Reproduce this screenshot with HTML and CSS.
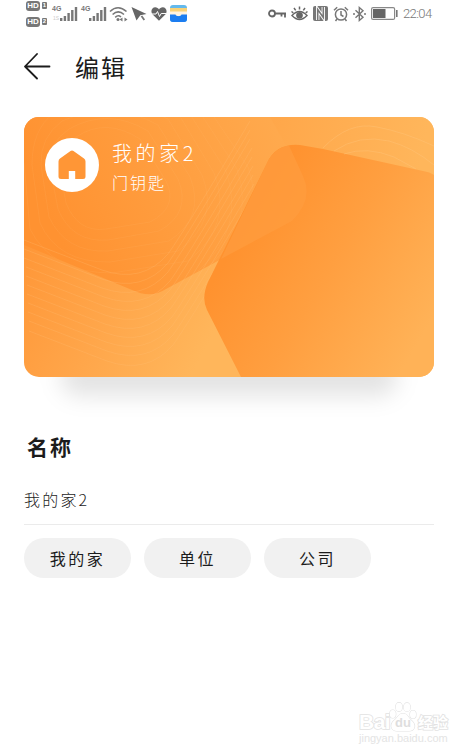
FILE: index.html
```html
<!DOCTYPE html>
<html lang="zh-CN">
<head>
    <meta charset="UTF-8">
    <meta name="viewport" content="width=device-width, initial-scale=1.0">
    <title>编辑</title>
    <link rel="stylesheet" href="styles.css">
</head>
<body>
    <div class="status-bar">
        <div class="status-left">
            <div class="sims">
                <div class="sim"><span class="hd">HD</span><span class="slot">1</span></div>
                <div class="sim"><span class="hd">HD</span><span class="slot">2</span></div>
            </div>
            <div class="signal">
                <span class="net">4G</span>
                <span class="roam">1S</span>
                <svg width="18" height="16" viewBox="0 0 18 16"><path d="M1.2 12v3M4.9 10v5M8.6 7v8M12.3 4v11M16 1v14" stroke="#777" stroke-width="2.4"/></svg>
            </div>
            <div class="signal second">
                <span class="net">4G</span>
                <svg width="18" height="16" viewBox="0 0 18 16"><path d="M1.2 12v3M4.9 10v5M8.6 7v8M12.3 4v11M16 1v14" stroke="#777" stroke-width="2.4"/></svg>
            </div>
            <svg class="wifi" width="19" height="16" viewBox="0 0 19 16" fill="none" stroke="#777" stroke-width="1.6">
                <path d="M1 5.5Q9 -2 17.5 5.5M3.6 8.5Q9.2 3.3 15 8.5M6.2 11.3Q9.2 8.4 12 11"/>
                <circle cx="9" cy="13.5" r="1.5" fill="#777" stroke="none"/>
                <path d="M10.5 13.5l3-2v4zM18.5 13.5l-3-2v4z" fill="#777" stroke="none"/>
            </svg>
            <svg class="send" width="16" height="16" viewBox="0 0 16 16" fill="#666">
                <path d="M.5 1L15.5 8 9.3 9.3 5.5 14.5z"/>
                <path d="M10.5 10l2.8 4" stroke="#777" stroke-width="1.8"/>
            </svg>
            <svg class="heart" width="16" height="14" viewBox="0 0 16 14">
                <path d="M8 13.7L1.4 7.3C-.8 4 1 .3 4.3.3 6 .3 7.2 1.2 8 2.6 8.8 1.2 10 .3 11.7.3 15 .3 16.8 4 14.6 7.3z" fill="#666"/>
                <path d="M1 7h4l1.5-2.5 2 5L10.2 6.500H15" fill="none" stroke="#fff" stroke-width="1"/>
            </svg>
            <svg class="wallet" width="17" height="17" viewBox="0 0 17 17">
                <rect width="17" height="17" rx="3" fill="#64b9ec"/>
                <path d="M0 3h17v5H0z" fill="#f9d277"/>
                <path d="M0 6.500h17V11H0z" fill="#fff3df"/>
                <path d="M0 9.500h5.500c.6 2.200 5.400 2.200 6 0H17V14a3 3 0 0 1-3 3H3a3 3 0 0 1-3-3z" fill="#1c7df0"/>
            </svg>
        </div>
        <div class="status-right">
            <svg width="19" height="10" viewBox="0 0 19 10" fill="none" stroke="#666" stroke-width="1.8">
                <circle cx="4" cy="4.500" r="3"/>
                <path d="M7 4.500h11M13.500 4.500v3M17 4v4.500"/>
            </svg>
            <svg class="eye" width="17" height="15" viewBox="0 0 17 15" fill="none" stroke="#666" stroke-width="1.5">
                <path d="M1 9.500Q8.500 1.500 16 9.500 8.500 17.500 1 9.500zM8.500.5v3M3 2l1.700 2.400M14 2l-1.700 2.400M.5 5.500l1.800 1.300M16.500 5.500l-1.800 1.300"/>
                <circle cx="8.500" cy="9.300" r="2.600" fill="#666"/>
            </svg>
            <svg class="nfc" width="15" height="15" viewBox="0 0 15 15">
                <rect width="15" height="15" rx="2" fill="#777"/>
                <path d="M4.700 14V3.500L10.300 11.500V1" fill="none" stroke="#fff" stroke-width="3.400"/>
                <path d="M4.700 14V3.500L10.300 11.500V1" fill="none" stroke="#777" stroke-width="1.600"/>
            </svg>
            <svg class="alarm" width="16" height="16" viewBox="0 0 16 16" fill="none" stroke="#777" stroke-width="1.5">
                <circle cx="8" cy="8.500" r="5.600"/>
                <path d="M8 5v4l2.500 1.500M1 4.200l3.200-2.900M15 4.200l-3.200-2.900M4 13l-1.500 2M12 13l1.500 2"/>
            </svg>
            <svg class="bt" width="13" height="16" viewBox="0 0 13 16" fill="none" stroke="#777" stroke-width="1.4">
                <path d="M2.500 4.300l7.500 7-3.700 3.200v-13L10 4.700l-7.500 7M0 8h2M11 8h2"/>
            </svg>
            <svg class="battery" width="27" height="13" viewBox="0 0 27 13">
                <rect x=".6" y=".6" width="23" height="11.800" rx="1.500" fill="none" stroke="#888" stroke-width="1.200"/>
                <rect x="2" y="2" width="12.500" height="9" fill="#666"/>
                <path d="M25.800 3v7" stroke="#777" stroke-width="1.600"/>
            </svg>
            <span class="time">22:04</span>
        </div>
    </div>

    <header class="top-bar">
        <svg width="28" height="28" viewBox="0 0 28 28" fill="none" stroke="#1c1c1c" stroke-width="1.8" stroke-linecap="round" stroke-linejoin="round">
            <path d="M13 2L1 14.500l12 12M1 14.500h24.500"/>
        </svg>
        <h1>编辑</h1>
    </header>

    <main>
        <section class="card">
            <svg class="card-bg" width="410" height="260" viewBox="0 0 410 260">
                <defs>
                    <linearGradient id="base" gradientUnits="userSpaceOnUse" x1="0" y1="130" x2="185" y2="225">
                        <stop offset="0" stop-color="#ff9738"/>
                        <stop offset=".5" stop-color="#ffa64a"/>
                        <stop offset="1" stop-color="#ffb65b"/>
                    </linearGradient>
                    <linearGradient id="left" gradientUnits="userSpaceOnUse" x1="30" y1="110" x2="260" y2="10">
                        <stop offset="0" stop-color="#ff9231"/>
                        <stop offset="1" stop-color="#ffaa4e"/>
                    </linearGradient>
                    <linearGradient id="right" gradientUnits="userSpaceOnUse" x1="215" y1="120" x2="395" y2="225">
                        <stop offset="0" stop-color="#ff922f"/>
                        <stop offset=".45" stop-color="#ff9f40"/>
                        <stop offset="1" stop-color="#ffb257"/>
                    </linearGradient>
                    <linearGradient id="corner" gradientUnits="userSpaceOnUse" x1="250" y1="0" x2="400" y2="30">
                        <stop offset="0" stop-color="#ffa74a"/>
                        <stop offset="1" stop-color="#ffb65b"/>
                    </linearGradient>
                    <path id="wave" d="M0 128L78 158Q118 172 144 142Q165 112 226 9"/>
                    <clipPath id="leftClip">
                        <path d="M0 0H246L279 59Q290 82 268 104L216 132 142 172Q127 182 108 173L0 128z"/>
                    </clipPath>
                </defs>
                <rect width="410" height="260" fill="url(#base)"/>
                <path d="M246 0H410V80H240z" fill="url(#corner)"/>
                <path d="M0 0H246L279 59Q290 82 268 104L216 132 142 172Q127 182 108 173L0 128z" fill="url(#left)"/>
                <g fill="none" stroke="#ffc17a" stroke-width=".8" opacity=".3">
                    <use href="#wave" y="-5"/>
                    <use href="#wave" y="4"/>
                    <use href="#wave" y="13"/>
                    <use href="#wave" x="2" y="22"/>
                    <use href="#wave" x="2" y="31"/>
                    <use href="#wave" x="3" y="40"/>
                    <use href="#wave" x="3" y="49"/>
                    <use href="#wave" x="4" y="58"/>
                    <use href="#wave" x="4" y="67"/>
                    <use href="#wave" x="5" y="76"/>
                    <use href="#wave" x="5" y="86"/>
                </g>
                <g fill="none" stroke="#ffc17a" stroke-width=".8" opacity=".15" clip-path="url(#leftClip)">
                    <path d="M52 20Q82 0 116 22L142 64Q155 90 126 105L82 112Q54 116 42 86L36 52Q32 32 52 20z"/>
                    <path d="M45 12Q84 -10 124 14L154 62Q168 96 135 114L84 123Q48 126 34 92L26 50Q24 26 45 12z"/>
                    <path d="M38 4Q88 -18 134 8L166 60Q182 100 145 124L84 134Q42 136 25 100L17 48Q16 20 38 4z"/>
                    <path d="M30 -4Q90 -26 144 2L178 58Q196 104 154 134L86 145Q34 146 16 106L8 48Q8 12 30 -4z"/>
                    <path d="M22 -12Q92 -34 154 -4L190 56Q210 108 164 144L88 156Q28 156 6 112L0 46"/>
                    <path d="M164 -6L202 54Q222 112 174 154M175 -6L213 52Q232 108 184 150M186 -6L224 50Q242 100 200 142"/>
                </g>
                <path d="M217 260L183 193Q177 181 184 165L243 46Q252 26 276 28L299 32 399 54Q406 55 410 58V260z" fill="url(#right)"/>
                <path d="M197 142L243 46Q250 31 265 28.500L279 59Q290 82 268 104z" fill="#ff9d3e" opacity=".7"/>
                <g fill="none" stroke="#ffc982" stroke-width="1" opacity=".35">
                    <path d="M299 31Q325 4 353 10 380 15 410 29"/>
                    <path d="M310 34Q335 17 365 24 388 30 410 48"/>
                    <path d="M320 37Q343 29 370 40L392 52"/>
                </g>
            </svg>
            <div class="card-info">
                <div class="card-icon">
                    <svg width="28" height="30" viewBox="0 0 28 30">
                        <path d="M12.500.9Q14 0 15.500.9L26 8.500Q27.500 9.600 27.500 11.500V26.500Q27.500 29 25 29H17.200V21H10.800V29H3Q.5 29 .5 26.500V11.500Q.5 9.600 2 8.500z" fill="#ff9636"/>
                    </svg>
                </div>
                <div class="card-text">
                    <div class="card-name">我的家2</div>
                    <div class="card-type">门钥匙</div>
                </div>
            </div>
        </section>

        <h2>名称</h2>
        <div class="name-field">我的家2</div>
        <div class="tags">
            <button>我的家</button>
            <button>单位</button>
            <button>公司</button>
        </div>
    </main>

    <div class="watermark">
        <div class="brand">
            <span class="bai">Bai</span>
            <span class="paw">
                <svg width="28" height="30" viewBox="0 0 28 30" fill="#fff" stroke="#e2e2e2" stroke-width="1.2">
                    <ellipse cx="3.800" cy="12" rx="3" ry="4"/>
                    <ellipse cx="10" cy="5" rx="3.300" ry="4.300"/>
                    <ellipse cx="18" cy="5.200" rx="3.300" ry="4.300"/>
                    <ellipse cx="24" cy="12.500" rx="3" ry="4"/>
                    <path d="M14 11.500C19 11.500 19 16 23 19 28 24 25 29 20 29H8C3 29 0 24 4.500 19 9 16 9 11.500 14 11.500z"/>
                </svg>
                <span class="du">du</span>
            </span>
            <span class="jy">经验</span>
        </div>
        <div class="url">jingyan.baidu.com</div>
    </div>
</body>
</html>
```
FILE: styles.css
```css
* {
    box-sizing: border-box;
}

body {
    margin: 0;
    width: 476px;
    height: 756px;
    overflow: hidden;
    position: relative;
    background: #fff;
    color: #1c1c1c;
    font-family: "Noto Sans CJK SC", sans-serif;
}

svg {
    display: block;
    flex: none;
}

/* Status bar */
.status-bar {
    display: flex;
    justify-content: space-between;
    height: 28px;
    padding: 0 44px 0 26px;
    color: #777;
}

.status-left,
.status-right {
    display: flex;
    align-items: center;
    height: 27px;
}

.sims {
    display: flex;
    flex-direction: column;
    gap: 6px;
    width: 22px;
}

.sim {
    display: flex;
    align-items: center;
    gap: 2px;
}

.hd {
    width: 14px;
    height: 10px;
    border-radius: 3px;
    background: #777;
    color: #fff;
    font: bold 8px/10px "Liberation Sans", sans-serif;
    text-align: center;
}

.slot {
    width: 5px;
    height: 7px;
    border-radius: 1px;
    background: #777;
    color: #fff;
    font: bold 6px/7px "Liberation Sans", sans-serif;
    text-align: center;
}

.signal {
    position: relative;
    width: 26px;
    height: 16px;
    margin-left: 4px;
    padding-left: 8px;
}

.signal.second {
    margin-left: 3px;
}

.net {
    position: absolute;
    left: 0;
    top: -1px;
    font: bold 7px/7px "Liberation Sans", sans-serif;
}

.roam {
    position: absolute;
    left: 1px;
    top: 9px;
    color: #ccc;
    font: 5px/6px "Liberation Sans", sans-serif;
}

.wifi {
    margin-left: 2px;
}

.send {
    margin-left: 3px;
}

.heart {
    margin-left: 4px;
}

.wallet {
    margin-left: 3px;
}

.eye {
    margin-left: 4px;
}

.nfc,
.alarm {
    margin-left: 5px;
}

.bt {
    margin-left: 4px;
}

.battery {
    margin-left: 5px;
}

.time {
    width: 29px;
    margin-left: 5px;
    font: 300 13px/16px Roboto, sans-serif;
    letter-spacing: -0.6px;
}

/* Header */
.top-bar {
    display: flex;
    align-items: center;
    gap: 23px;
    height: 76px;
    padding: 0 24px;
}

h1 {
    margin: 2px 0 0;
    font-size: 24px;
    font-weight: 400;
    line-height: 30px;
    letter-spacing: 2px;
}

main {
    padding: 13px 42px 0 24px;
}

/* Card */
.card {
    position: relative;
    height: 260px;
}

.card::before {
    content: "";
    position: absolute;
    left: 36px;
    right: 36px;
    bottom: -19px;
    height: 40px;
    border-radius: 20px;
    background: rgba(0, 0, 0, 0.11);
    filter: blur(11px);
}

.card-bg {
    position: absolute;
    inset: 0;
    border-radius: 15px;
}

.card-info {
    position: relative;
    display: flex;
    gap: 13px;
    padding: 21px;
}

.card-icon {
    display: flex;
    align-items: center;
    justify-content: center;
    width: 54px;
    height: 54px;
    border-radius: 50%;
    background: #fff;
}

.card-text {
    color: #fff;
}

.card-name {
    font-size: 20px;
    font-weight: 300;
    line-height: 29px;
    letter-spacing: 3.6px;
}

.card-type {
    margin-top: 4px;
    font-size: 16px;
    font-weight: 300;
    line-height: 22px;
    letter-spacing: 2px;
}

/* Name form */
h2 {
    margin: 55px 0 0 3px;
    font-size: 21px;
    font-weight: 700;
    line-height: 28px;
    letter-spacing: 2px;
}

.name-field {
    height: 65px;
    padding-top: 27px;
    border-bottom: 1px solid #ebebeb;
    font-size: 16px;
    font-weight: 300;
    line-height: 24px;
    letter-spacing: 2.2px;
}

.tags {
    display: flex;
    gap: 13px;
    margin-top: 13px;
}

.tags button {
    width: 107px;
    height: 40px;
    padding: 0;
    border: 0;
    border-radius: 20px;
    background: #f1f1f1;
    color: #1c1c1c;
    font-family: inherit;
    font-size: 16px;
    letter-spacing: 2.5px;
}

/* Watermark */
.watermark {
    position: absolute;
    left: 359px;
    top: 701px;
    color: #fff;
    -webkit-text-stroke: 1.6px #e2e2e2;
    paint-order: stroke fill;
}

.brand {
    display: flex;
    align-items: flex-end;
    height: 31px;
}

.bai {
    width: 30px;
    font: bold 21px/20px "Liberation Sans", sans-serif;
    letter-spacing: -0.5px;
}

.paw {
    position: relative;
}

.du {
    position: absolute;
    left: 6px;
    bottom: 2px;
    color: #dedede;
    font: bold 13px/14px "Liberation Sans", sans-serif;
    -webkit-text-stroke: 0;
}

.jy {
    margin-left: 1px;
    font-size: 15px;
    font-weight: 700;
    line-height: 20px;
}

.url {
    color: #e4e4e4;
    font: 11px/12px "Liberation Sans", sans-serif;
    -webkit-text-stroke: 0;
}
```
